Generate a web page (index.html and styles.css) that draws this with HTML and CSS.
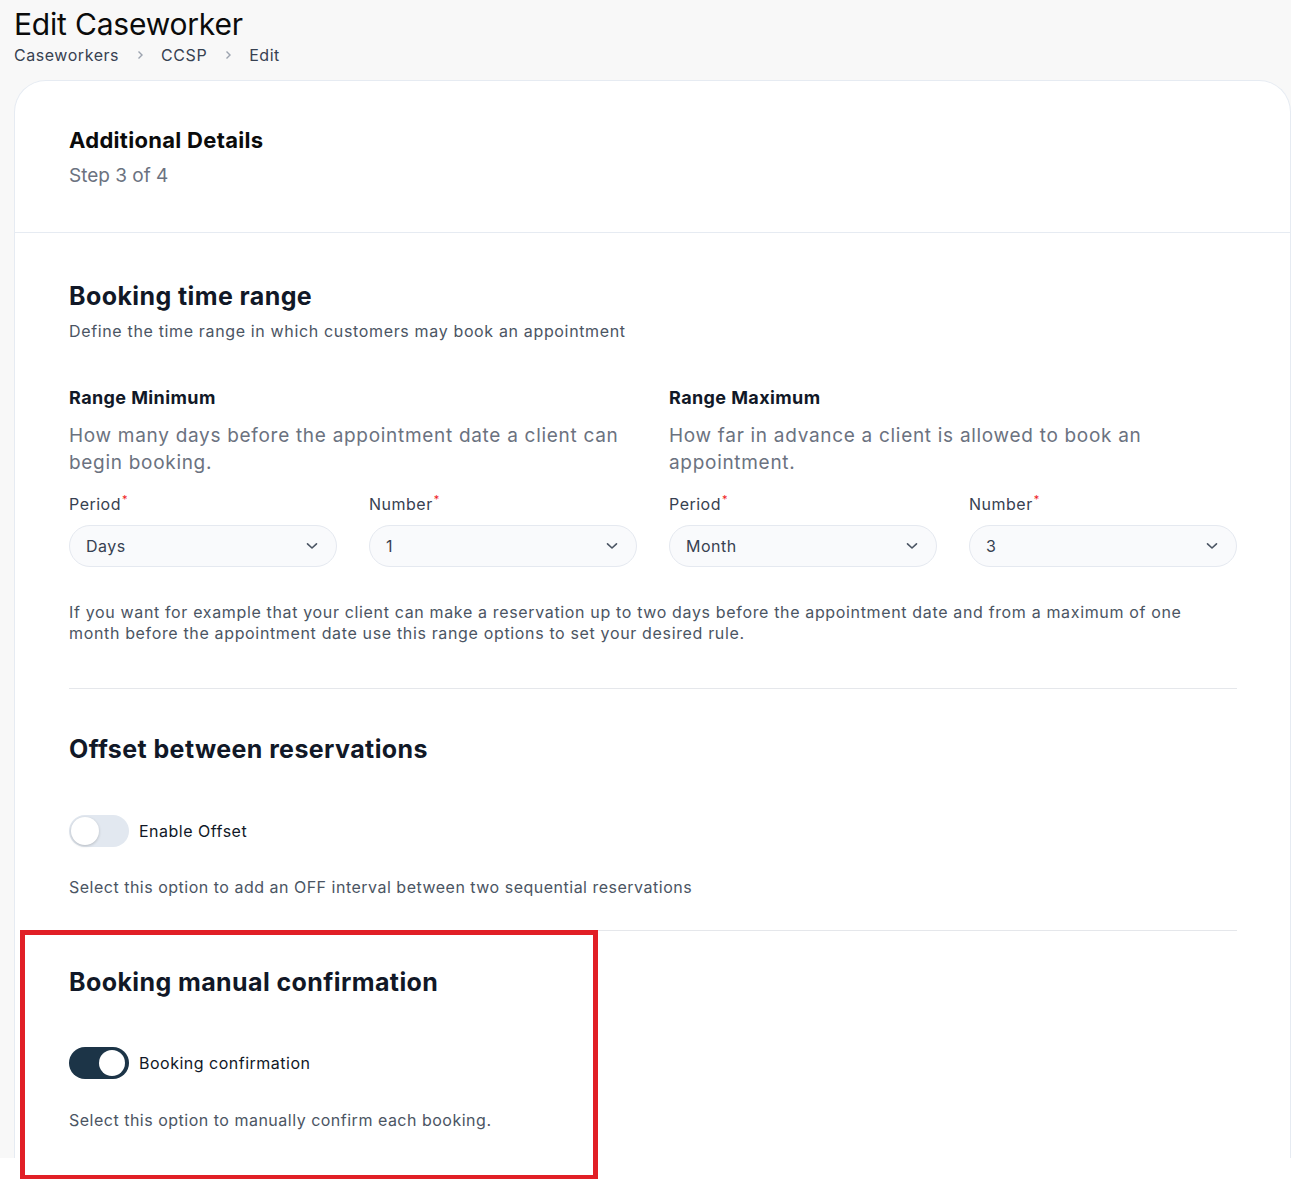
FILE: index.html
```html
<!DOCTYPE html>
<html lang="en">
<head>
    <meta charset="UTF-8">
    <meta name="viewport" content="width=device-width, initial-scale=1.0">
    <title>Edit Caseworker</title>
    <link rel="stylesheet" href="styles.css">
</head>
<body>
    <div class="page">
        <header class="page-head">
            <h1>Edit Caseworker</h1>
            <nav class="crumbs">
                <a href="#">Caseworkers</a>
                <svg class="crumb-sep" width="10" height="10" viewBox="0 0 10 10"><path d="M3.5 1.5 L7 5 L3.5 8.5" fill="none" stroke="#9ca3af" stroke-width="1.4"/></svg>
                <a href="#">CCSP</a>
                <svg class="crumb-sep" width="10" height="10" viewBox="0 0 10 10"><path d="M3.5 1.5 L7 5 L3.5 8.5" fill="none" stroke="#9ca3af" stroke-width="1.4"/></svg>
                <span>Edit</span>
            </nav>
        </header>

        <div class="card">
            <div class="card-head">
                <h2>Additional Details</h2>
                <p class="step">Step 3 of 4</p>
            </div>

            <div class="card-body">
                <section class="block range-block">
                    <h3>Booking time range</h3>
                    <p class="sub">Define the time range in which customers may book an appointment</p>

                    <div class="ranges">
                        <div class="range">
                            <h4>Range Minimum</h4>
                            <p class="desc">How many days before the appointment date a client can begin booking.</p>
                            <div class="fields">
                                <div class="field">
                                    <label>Period<sup>*</sup></label>
                                    <div class="select">
                                        <span>Days</span>
                                        <svg width="12" height="8" viewBox="0 0 12 8"><path d="M1.5 1.8 L6 6 L10.5 1.8" fill="none" stroke="#4b5563" stroke-width="1.6" stroke-linecap="round" stroke-linejoin="round"/></svg>
                                    </div>
                                </div>
                                <div class="field">
                                    <label>Number<sup>*</sup></label>
                                    <div class="select">
                                        <span>1</span>
                                        <svg width="12" height="8" viewBox="0 0 12 8"><path d="M1.5 1.8 L6 6 L10.5 1.8" fill="none" stroke="#4b5563" stroke-width="1.6" stroke-linecap="round" stroke-linejoin="round"/></svg>
                                    </div>
                                </div>
                            </div>
                        </div>
                        <div class="range">
                            <h4>Range Maximum</h4>
                            <p class="desc">How far in advance a client is allowed to book an appointment.</p>
                            <div class="fields">
                                <div class="field">
                                    <label>Period<sup>*</sup></label>
                                    <div class="select">
                                        <span>Month</span>
                                        <svg width="12" height="8" viewBox="0 0 12 8"><path d="M1.5 1.8 L6 6 L10.5 1.8" fill="none" stroke="#4b5563" stroke-width="1.6" stroke-linecap="round" stroke-linejoin="round"/></svg>
                                    </div>
                                </div>
                                <div class="field">
                                    <label>Number<sup>*</sup></label>
                                    <div class="select">
                                        <span>3</span>
                                        <svg width="12" height="8" viewBox="0 0 12 8"><path d="M1.5 1.8 L6 6 L10.5 1.8" fill="none" stroke="#4b5563" stroke-width="1.6" stroke-linecap="round" stroke-linejoin="round"/></svg>
                                    </div>
                                </div>
                            </div>
                        </div>
                    </div>

                    <p class="note">If you want for example that your client can make a reservation up to two days before the appointment date and from a maximum of one month before the appointment date use this range options to set your desired rule.</p>
                </section>

                <section class="block offset-block">
                    <h3>Offset between reservations</h3>
                    <div class="switch-row">
                        <span class="switch"><span class="knob"></span></span>
                        <span class="switch-label">Enable Offset</span>
                    </div>
                    <p class="hint">Select this option to add an OFF interval between two sequential reservations</p>
                </section>

                <section class="block confirm-block">
                    <h3>Booking manual confirmation</h3>
                    <div class="switch-row">
                        <span class="switch on"><span class="knob"></span></span>
                        <span class="switch-label">Booking confirmation</span>
                    </div>
                    <p class="hint">Select this option to manually confirm each booking.</p>
                </section>
            </div>
        </div>
    </div>
    <div class="highlight"></div>
</body>
</html>
```

FILE: styles.css
```css
body {
    margin: 0;
    padding: 0;
    min-height: 1179px;
    background-color: #ffffff;
    font-family: 'Inter', 'Open Sans', sans-serif;
    color: #111827;
    position: relative;
}
.page {
    background-color: #f8f8f8;
    padding-left: 14px;
}
.page-head h1 {
    margin: 0;
    padding-top: 5px;
    font-size: 30px;
    line-height: 38px;
    font-weight: 400;
    color: #0b0b0b;
    letter-spacing: -0.2px;
}
.crumbs {
    display: flex;
    align-items: center;
    gap: 16px;
    font-size: 16px;
    line-height: 24px;
    color: #374151;
    letter-spacing: 0.55px;
    padding-bottom: 13px;
}
.crumbs a {
    color: #374151;
    text-decoration: none;
}
.card {
    background-color: #ffffff;
    border: 1px solid #e6ebf2;
    border-bottom: none;
    border-radius: 32px 32px 0 0;
}
.card-head {
    padding: 44px 54px 43px;
    border-bottom: 1px solid #e6ebf2;
}
.card-head h2 {
    margin: 0;
    font-size: 22px;
    line-height: 30px;
    font-weight: 700;
    color: #0b0b0b;
    letter-spacing: 0.3px;
}
.step {
    margin: 8px 0 0;
    font-size: 19px;
    line-height: 26px;
    color: #6b7280;
}
.card-body {
    padding: 0 53px 0 54px;
}
.block {
    border-bottom: 1px solid #e5e7eb;
}
.block h3 {
    margin: 0;
    font-size: 25px;
    line-height: 32px;
    font-weight: 700;
    color: #111827;
    letter-spacing: 0.4px;
}
.range-block {
    padding: 47px 0 44px;
}
.offset-block {
    padding: 44px 0 32px;
}
.confirm-block {
    padding: 35px 0 27px;
    border-bottom: none;
}
.confirm-block .switch-row {
    margin-top: 49px;
}
.sub {
    margin: 8px 0 0;
    font-size: 16px;
    line-height: 22px;
    color: #4b5563;
    letter-spacing: 0.65px;
}
.ranges {
    display: grid;
    grid-template-columns: 1fr 1fr;
    gap: 32px;
    margin-top: 44px;
}
.range h4 {
    margin: 0;
    font-size: 18px;
    line-height: 24px;
    font-weight: 700;
    color: #111827;
    letter-spacing: 0.4px;
}
.desc {
    margin: 12px 0 0;
    font-size: 19px;
    line-height: 27px;
    color: #6b7280;
    letter-spacing: 0.7px;
}
.fields {
    display: grid;
    grid-template-columns: 1fr 1fr;
    gap: 32px;
    margin-top: 17px;
}
.field label {
    display: block;
    font-size: 16px;
    line-height: 22px;
    color: #374151;
    letter-spacing: 0.5px;
}
.field sup {
    color: #ef1c24;
    font-size: 11px;
    line-height: 0;
    vertical-align: 7px;
    margin-left: 1px;
}
.select {
    margin-top: 10px;
    height: 42px;
    box-sizing: border-box;
    border: 1px solid #e5e9f0;
    border-radius: 22px;
    background-color: #f9fafc;
    display: flex;
    align-items: center;
    justify-content: space-between;
    padding: 0 18px 0 16px;
    font-size: 16px;
    color: #374151;
    letter-spacing: 0.5px;
}
.note {
    margin: 35px 0 0;
    font-size: 16px;
    line-height: 21px;
    color: #4b5563;
    letter-spacing: 0.65px;
}
.switch-row {
    display: flex;
    align-items: center;
    gap: 10px;
    margin-top: 50px;
}
.switch {
    width: 60px;
    height: 32px;
    border-radius: 16px;
    background-color: #e2e8f0;
    position: relative;
    flex-shrink: 0;
}
.knob {
    position: absolute;
    top: 2px;
    left: 2px;
    width: 28px;
    height: 28px;
    border-radius: 50%;
    background-color: #ffffff;
    box-shadow: 0 1px 3px rgba(0, 0, 0, 0.2);
}
.switch.on {
    background-color: #1c3447;
}
.switch.on .knob {
    left: 30px;
    top: 3px;
    width: 26px;
    height: 26px;
    box-shadow: none;
}
.switch-label {
    font-size: 16px;
    color: #111827;
    letter-spacing: 0.5px;
}
.hint {
    margin: 30px 0 0;
    font-size: 16px;
    line-height: 22px;
    color: #4b5563;
    letter-spacing: 0.5px;
}
.offset-block .hint {
    margin-top: 29px;
}
/* annotation frame */
.highlight {
    position: absolute;
    left: 20px;
    top: 930px;
    width: 568px;
    height: 240px;
    border: 5px solid #e11f26;
}
```
